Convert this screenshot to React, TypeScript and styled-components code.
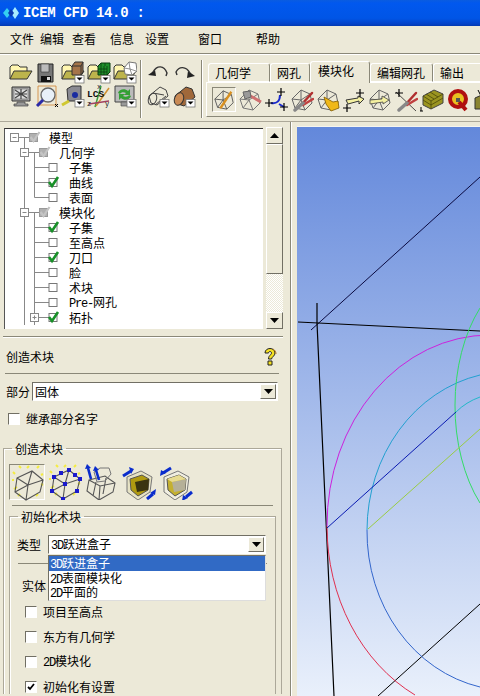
import * as React from 'react';
import styled, { createGlobalStyle } from 'styled-components';

const GlobalStyle = createGlobalStyle`
  html, body {
    margin: 0;
    padding: 0;
    background: #ece9d8;
  }
  body {
    font: 12px/15px "Noto Sans CJK SC", "Liberation Sans", sans-serif;
    color: #000;
  }
`;

const Page = styled.div`
  width: 480px;
  height: 696px;
  overflow: hidden;
  background: #ece9d8;
  display: flex;
  flex-direction: column;
`;

const TitleBar = styled.div`
  height: 26px;
  flex: none;
  display: flex;
  align-items: center;
  gap: 4px;
  padding-left: 3px;
  box-sizing: border-box;
  color: #fff;
  font: bold 14px/16px "Liberation Mono", monospace;
  letter-spacing: -0.3px;
  background: linear-gradient(#0a5ce0 0, #0158ee 12%, #0055e6 70%, #0342c8 92%, #0339b0 100%);
`;

const MenuBar = styled.div`
  height: 28px;
  flex: none;
  display: flex;
  align-items: center;
  box-sizing: border-box;
  padding: 0 0 2px 10px;
  border-bottom: 1px solid #8a8878;
  box-shadow: 0 1px 0 #fff;
`;

const MenuItem = styled.span<{ $left: number }>`
  margin-left: ${p => p.$left}px;
  line-height: 16px;
`;

const ToolArea = styled.div`
  height: 68px;
  flex: none;
  display: flex;
  box-sizing: border-box;
  padding: 6px 0 0 9px;
  border-bottom: 1px solid #aca899;
`;

const ToolGrid = styled.div<{ $cols: number }>`
  display: grid;
  grid-template-columns: repeat(${p => p.$cols}, 24px);
  grid-auto-rows: 24px;
  column-gap: 2px;
  align-content: start;
`;

const ToolSep = styled.div<{ $left: number; $right: number }>`
  width: 1px;
  height: 58px;
  background: #8a8878;
  box-shadow: 1px 0 0 #fff;
  margin: 0 ${p => p.$right}px 0 ${p => p.$left}px;
`;

const TabColumn = styled.div`
  flex: 1;
  display: flex;
  flex-direction: column;
  min-width: 0;
`;

const TabRow = styled.div`
  height: 22px;
  display: flex;
  align-items: flex-end;
  padding-left: 2px;
`;

const Tab = styled.div<{ $width: number; $active?: boolean }>`
  width: ${p => p.$width}px;
  height: ${p => (p.$active ? 22 : 19)}px;
  flex: none;
  box-sizing: border-box;
  padding-left: ${p => (p.$active ? 7 : 6)}px;
  border: 1px solid #fff;
  border-bottom: ${p => (p.$active ? 'none' : '1px solid #fff')};
  border-right: 1px solid #8a8878;
  border-radius: 3px 3px 0 0;
  line-height: 17px;
  white-space: nowrap;
  overflow: hidden;
  background: #ece9d8;
  margin-bottom: ${p => (p.$active ? -1 : 0)}px;
  position: relative;
`;

const TabPanel = styled.div`
  height: 35px;
  box-sizing: border-box;
  border-top: 1px solid #fff;
  border-left: 1px solid #fff;
  border-bottom: 1px solid #8a8878;
  display: flex;
  align-items: center;
  padding-left: 5px;
  gap: 2px;
`;

const TabTool = styled.div<{ $selected?: boolean }>`
  width: 24px;
  height: 25px;
  flex: none;
  box-sizing: border-box;
  ${p => p.$selected && 'border: 1px solid; border-color: #8a8878 #fff #fff #8a8878;'}
  display: flex;
  align-items: center;
  justify-content: center;
`;

const Main = styled.div`
  flex: 1;
  display: flex;
  min-height: 0;
`;

const LeftPanel = styled.div`
  width: 283px;
  flex: none;
  display: flex;
  flex-direction: column;
`;

const TreeSection = styled.div`
  display: flex;
  padding: 5px 0 0 4px;
`;

const TreeBox = styled.div`
  width: 259px;
  height: 201px;
  margin-top: 1px;
  box-sizing: border-box;
  background: #fff;
  border-top: 1px solid #333;
  border-left: 1px solid #555;
  overflow: hidden;
  padding-top: 1px;
`;

const TreeRow = styled.div`
  height: 15px;
  display: flex;
  align-items: center;
  white-space: nowrap;
`;

const TreeLabel = styled.span`
  line-height: 15px;
`;

const Latin = styled.span`
  font: 12px/14px "Liberation Mono", monospace;
  letter-spacing: -1.2px;
`;

const ScrollBar = styled.div`
  width: 17px;
  height: 202px;
  margin-left: 3px;
  flex: none;
  display: flex;
  flex-direction: column;
`;

const ScrollButton = styled.div`
  height: 17px;
  flex: none;
  box-sizing: border-box;
  background: #ece9d8;
  border: 1px solid;
  border-color: #fff #716f64 #716f64 #fff;
  display: flex;
  align-items: center;
  justify-content: center;
`;

const ScrollThumb = styled.div`
  height: 130px;
  flex: none;
  box-sizing: border-box;
  background: #ece9d8;
  border: 1px solid;
  border-color: #fff #716f64 #716f64 #fff;
`;

const ScrollTrack = styled.div`
  flex: 1;
  background: repeating-conic-gradient(#fff 0 25%, #ece9d8 0 50%) 0 0 / 2px 2px;
`;

const Groove = styled.div`
  height: 0;
  margin: 7px 0 0 3px;
  border-top: 1px solid #8a8878;
  border-bottom: 1px solid #fff;
`;

const FormTitle = styled.div`
  height: 36px;
  box-sizing: border-box;
  margin: 0 4px 0 5px;
  display: flex;
  align-items: center;
  justify-content: space-between;
  padding: 2px 2px 0 1px;
  border-bottom: 1px solid #8a8878;
`;

const PartRow = styled.div`
  display: flex;
  align-items: center;
  margin: 8px 0 0 6px;
  gap: 2px;
`;

const Combo = styled.div<{ $width: number }>`
  position: relative;
  width: ${p => p.$width}px;
  height: 19px;
  box-sizing: border-box;
  background: #fff;
  border: 1px solid;
  border-color: #716f64 #fff #fff #716f64;
  display: flex;
  align-items: center;
  justify-content: space-between;
  padding-left: 2px;
  flex: none;
`;

const ComboArrow = styled.div`
  width: 16px;
  height: 15px;
  box-sizing: border-box;
  background: #ece9d8;
  border: 1px solid;
  border-color: #fff #716f64 #716f64 #fff;
  margin-right: 1px;
  display: flex;
  align-items: center;
  justify-content: center;
`;

const Check = styled.div`
  width: 12px;
  height: 12px;
  flex: none;
  box-sizing: border-box;
  background: #fff;
  border: 1px solid;
  border-color: #716f64 #fff #fff #716f64;
  display: flex;
  align-items: center;
  justify-content: center;
`;

const CheckRow = styled.div<{ $top: number; $left: number }>`
  display: flex;
  align-items: center;
  gap: 6px;
  margin: ${p => p.$top}px 0 0 ${p => p.$left}px;
  height: 15px;
`;

const GroupBox = styled.fieldset<{ $top: number; $left: number; $right: number }>`
  margin: ${p => p.$top}px ${p => p.$right}px 0 ${p => p.$left}px;
  padding: 0;
  min-width: 0;
  border: 1px solid #aca899;
  box-shadow: inset 1px 1px 0 #fff;
  border-bottom: none;
`;

const Legend = styled.legend`
  margin-left: 8px;
  padding: 0 3px;
  line-height: 15px;
`;

const BlockTools = styled.div`
  display: flex;
  align-items: center;
  margin: 8px 0 0 5px;
`;

const BlockTool = styled.div<{ $selected?: boolean; $gap: number }>`
  width: 36px;
  height: 36px;
  flex: none;
  box-sizing: border-box;
  margin-right: ${p => p.$gap}px;
  ${p => p.$selected && 'border: 1px solid; border-color: #8a8878 #fff #fff #8a8878;'}
`;

const ThinRule = styled.div<{ $top: number }>`
  height: 1px;
  background: #8a8878;
  margin: ${p => p.$top}px 8px 0 8px;
`;

const TypeRow = styled.div`
  display: flex;
  align-items: center;
  margin: 11px 0 0 7px;
  gap: 7px;
`;

const DropList = styled.div`
  position: absolute;
  left: -1px;
  top: 19px;
  width: 218px;
  height: 46px;
  box-sizing: border-box;
  background: #fff;
  border: 1px solid;
  border-color: #716f64 #ddd #ddd #716f64;
  z-index: 2;
`;

const DropItem = styled.div<{ $selected?: boolean }>`
  height: 14.5px;
  line-height: 14px;
  padding-left: 1px;
  white-space: nowrap;
  ${p => p.$selected && 'background: #316ac5; color: #fff;'}
`;

const DropText = styled.span<{ $underline?: boolean }>`
  display: inline-block;
  ${p => p.$underline && 'width: 83px; border-bottom: 1px solid #fff; line-height: 12px;'}
`;

const FieldLabel = styled.div`
  margin: 14px 0 0 12px;
  line-height: 15px;
`;

const Sash = styled.div`
  width: 14px;
  flex: none;
  box-sizing: border-box;
  padding-left: 7px;
`;

const SashLine = styled.div`
  width: 1px;
  height: 100%;
  background: #8a8878;
  box-shadow: 1px 0 0 #fff;
`;

const Viewport = styled.div`
  flex: 1;
  margin-top: 4px;
  background: linear-gradient(#6388db 0, #e9f0fb 100%);
  border-top: 1px solid #f6f5ee;
  overflow: hidden;
`;

const ViewSvg = styled.svg`
  display: block;
`;

const IconSvg = styled.svg`
  display: block;
`;

/* ---------- icons ---------- */

const Icon: React.FC<{ size?: number; view?: number; children: React.ReactNode }> = ({ size = 24, view = 24, children }) => (
  <IconSvg width={size} height={size} viewBox={`0 0 ${view} ${view}`}>
    {children}
  </IconSvg>
);

const Badge = () => (
  <g>
    <rect x="14" y="15.5" width="9" height="7.5" fill="#fff" stroke="#777" strokeWidth="0.8" />
    <path d="M15.5 17.5h6l-3 3z" fill="#000" />
  </g>
);

const Folder = () => (
  <g stroke="#333" strokeWidth="1">
    <path d="M1 19V7l2-2h6l2 2h7v4" fill="#fff6b0" />
    <path d="M1 19l4-8h18l-5 8z" fill="#bdb44c" />
  </g>
);

const Wire = ({ color = '#555' }: { color?: string }) => (
  <g fill="none" stroke={color} strokeWidth="1">
    <path d="M11 2l9 4 2 9-7 7-10-2-3-9z" />
    <path d="M11 12L11 2M11 12l9-6M11 12l4 10M11 12L2 11M11 12l-6 8" />
  </g>
);

const Stars = ({ pts }: { pts: [number, number][] }) => (
  <g stroke="#000" strokeWidth="1.2">
    {pts.map(([x, y]) => (
      <path key={`${x}-${y}`} d={`M${x - 4} ${y}h8M${x} ${y - 4}v8`} />
    ))}
  </g>
);

const Pliers = () => (
  <g fill="none" strokeLinecap="round">
    <path d="M12 16l10-11" stroke="#b03030" strokeWidth="2.5" />
    <path d="M13 17l10-6" stroke="#c04040" strokeWidth="2.5" />
    <path d="M5 22l8-7" stroke="#888" strokeWidth="3.5" />
  </g>
);

// blue double arrows beside the solid cubes, x/y is the arrow head
const BlockArrow = ({ d, head }: { d: string; head: string }) => (
  <g>
    <path d={d} fill="none" stroke="#0a2ccc" strokeWidth="3" />
    <path d={head} fill="#0a2ccc" />
  </g>
);

const GoldCube = ({ light = false }: { light?: boolean }) => (
  <g stroke="#555" strokeWidth="1">
    <path d="M5 13L19 7l11 6-2 15-12 8-11-8z" fill={light ? '#f0eee0' : '#e6e2c4'} stroke="#777" />
    <path d="M8 15l12-4 7 4-1 11-10 6-7-6z" fill={light ? '#c4b030' : '#b09a10'} />
    <path d="M13 18l14-3-1 11-11 2z" fill={light ? '#b5b098' : '#3a3410'} stroke="none" />
    {light && <path d="M8 15l12-4 7 4-14 3z" fill="#e8dc90" stroke="none" />}
  </g>
);

const fileTools: React.ReactNode[] = [
  <Icon key="open"><Folder /></Icon>,
  <Icon key="save">
    <path d="M3 4h15v18H3z" fill="#777" stroke="#222" />
    <path d="M6 4h8v8H6z" fill="#bbb" stroke="#333" strokeWidth="0.6" />
    <path d="M6 16h10v6H6z" fill="#111" />
    <path d="M12 17h3v3h-3z" fill="#ddd" />
  </Icon>,
  <Icon key="box">
    <Folder />
    <path d="M11 6l3-4h8v10l-2 3h-9z" fill="#a5744a" stroke="#333" />
    <path d="M11 6h9v9M20 6l2-4" fill="none" stroke="#333" />
    <Badge />
  </Icon>,
  <Icon key="mesh">
    <Folder />
    <path d="M11 6l3-3h9v9l-3 3h-9z" fill="#1f8f2a" stroke="#0b3d10" />
    <path d="M11 9h9M11 12h9M14 6v9M17 6v9M20 6v9M14 3v3M18 3v3" stroke="#0b3d10" strokeWidth="0.8" />
    <Badge />
  </Icon>,
  <Icon key="wirefile">
    <Folder />
    <path d="M11 8l5-6 7 1 1 8-5 4-7-1z" fill="#fff" stroke="#777" />
    <path d="M16 2l1 7-6-1M17 9l6 2M17 9l2 6" fill="none" stroke="#777" strokeWidth="0.8" />
    <Badge />
  </Icon>,
  <Icon key="undo">
    <path d="M2 15l7-5 1 6z" fill="#222" />
    <path d="M7 12C11 5 18 5 21 13l-1 3" fill="none" stroke="#333" strokeWidth="1.4" />
  </Icon>,
  <Icon key="redo">
    <path d="M23 16l-7-5-1 7z" fill="#222" />
    <path d="M18 13C14 6 7 6 4 12l1 3" fill="none" stroke="#333" strokeWidth="1.4" />
  </Icon>,
  <Icon key="fit">
    <path d="M3 3h18v14H3z" fill="#aaa" stroke="#333" />
    <path d="M5 5h14v10H5z" fill="#ddd" stroke="#666" strokeWidth="0.6" />
    <path d="M6 6l12 8M18 6L6 14M12 5v10M6 10h12" stroke="#444" strokeWidth="1.2" />
    <path d="M8 18h8v2h3v2H5v-2h3z" fill="#999" stroke="#444" strokeWidth="0.7" />
  </Icon>,
  <Icon key="zoom">
    <path d="M3 2h18v19H3z" fill="none" stroke="#d08030" strokeWidth="0.8" />
    <circle cx="13" cy="11" r="7" fill="#e8f0f8" stroke="#666" strokeWidth="1.3" />
    <path d="M8 16l-6 6" stroke="#2a2aa8" strokeWidth="3" />
    <path d="M20 20l3 3M23 20l-3 3" stroke="#000" />
  </Icon>,
  <Icon key="tape">
    <path d="M6 5l5-3h9v15H7z" fill="#8a8a92" stroke="#333" />
    <circle cx="14" cy="11" r="3" fill="#1a2ca0" />
    <path d="M1 21l7-4" stroke="#d0c830" strokeWidth="3" />
    <Badge />
  </Icon>,
  <Icon key="lcs">
    <path d="M14 2l-6 21" stroke="#40a040" strokeWidth="1.5" />
    <path d="M22 4L9 22" stroke="#d09030" strokeWidth="1.5" />
    <path d="M2 20l20-3" stroke="#a04060" strokeWidth="1.5" />
    <text x="0" y="13" fontFamily="Liberation Mono" fontWeight="bold" fontSize="9.5" fill="#111">LCS</text>
    <text x="10" y="5" fontFamily="Liberation Mono" fontSize="7" fill="#111">x</text>
    <text x="0" y="22" fontFamily="Liberation Mono" fontSize="7" fill="#111">z</text>
    <text x="18" y="22" fontFamily="Liberation Mono" fontSize="7" fill="#111">y</text>
  </Icon>,
  <Icon key="refresh">
    <path d="M2 2h19v16H2z" fill="#bbb" stroke="#444" />
    <path d="M5 9c1-4 7-5 10-2l2-2v6h-6l2-2c-2-1-5-1-6 1z" fill="#35a035" />
    <path d="M18 12c-1 4-7 5-10 2l-2 2v-6h6l-2 2c2 1 5 1 6-1z" fill="#35a035" />
    <path d="M8 18h8v4H8z" fill="#999" stroke="#444" strokeWidth="0.6" />
    <Badge />
  </Icon>,
  <Icon key="wirecyl">
    <g fill="none" stroke="#444" strokeWidth="1">
      <path d="M3 12l11-9 6 3 2 6-11 9-6-2z" />
      <ellipse cx="6.5" cy="15" rx="4" ry="6" transform="rotate(20 6.5 15)" />
      <path d="M7 9l11 2M9 21l11-9" />
    </g>
    <Badge />
  </Icon>,
  <Icon key="solidcyl">
    <path d="M3 12L14 3l6 2 3 8-11 9-6-2z" fill="#a0683a" stroke="#333" />
    <ellipse cx="7" cy="15" rx="4.5" ry="6.5" transform="rotate(20 7 15)" fill="#c98a55" stroke="#333" />
    <Badge />
  </Icon>,
];

const tabTools: React.ReactNode[] = [
  <Icon key="t1">
    <Wire />
    <path d="M8 21L20 3" stroke="#d89020" strokeWidth="2.5" />
  </Icon>,
  <Icon key="t2">
    <Wire color="#777" />
    <path d="M9 6l14 8" stroke="#d07070" strokeWidth="3" />
    <path d="M5 4l7-1 1 6-6 2z" fill="#999" stroke="#666" />
  </Icon>,
  <Icon key="t3">
    <path d="M7 15c6 1 9-2 9-8M15 16l5 3" fill="none" stroke="#1a2acc" strokeWidth="2" />
    <Stars pts={[[17, 4], [5, 15], [20, 19]]} />
  </Icon>,
  <Icon key="t4">
    <Wire color="#666" />
    <Pliers />
  </Icon>,
  <Icon key="t5">
    <Wire color="#666" />
    <path d="M8 9l9 5 5-1 1 7-8 3-5-7z" fill="#f0b818" stroke="#805a00" strokeWidth="0.8" />
  </Icon>,
  <Icon key="t6">
    <path d="M4 12l12-2V8l6 3-5 5v-3L6 16z" fill="#f4f0a0" stroke="#333" />
    <Stars pts={[[18, 5], [5, 20]]} />
  </Icon>,
  <Icon key="t7">
    <Wire color="#666" />
    <path d="M2 12l12-1V8l7 4-6 4v-2L2 16z" fill="#f4f0a0" stroke="#444" strokeWidth="0.8" />
  </Icon>,
  <Icon key="t8">
    <path d="M2 4l20 19" stroke="#222" strokeWidth="0.8" />
    <Pliers />
    <Stars pts={[[5, 5]]} />
  </Icon>,
  <Icon key="t9">
    <path d="M3 8l11-6 9 4v9l-12 6-8-4z" fill="#9a9420" stroke="#444" />
    <path d="M3 8l8 5 12-7M11 13v8M6 6l8 5M10 4l8 5M3 12l8 5 12-7" fill="none" stroke="#4a4608" strokeWidth="0.8" />
    <path d="M1 19v4M0 23h3" stroke="#000" />
  </Icon>,
  <Icon key="t10">
    <circle cx="12" cy="11" r="8" fill="#e8c020" stroke="#b01010" strokeWidth="4" />
    <path d="M13 14l7 8" stroke="#b01010" strokeWidth="4" />
    <path d="M10 10h4v4h-4z" fill="#555" />
  </Icon>,
  <Icon key="t11">
    <path d="M3 10l9-4 9 4v11H3z" fill="#8a8430" stroke="#333" />
    <path d="M6 2l3 6M16 2l-2 6" stroke="#000" />
  </Icon>,
];

const yellowDashes = 'M3 7l2 2M9 1l2 2M19 1l-2 2M29 1l-2 2M33 9l-2 1M33 20l-2-1M4 24l3-2M8 31l2-2M26 31l2-2M2 15h2';

const blockTools: React.ReactNode[] = [
  <g key="b1" fill="none">
    <path d={yellowDashes} stroke="#f4ec40" strokeWidth="2" />
    <path d="M7 13l15-7 11 9-3 12-14 8-11-8z M18 20L22 6M18 20L33 15M18 20L16 35M18 20L7 13M18 20L5 27" stroke="#555" strokeWidth="1.1" />
  </g>,
  <g key="b2" fill="none">
    <path d={yellowDashes} stroke="#f4ec40" strokeWidth="2" />
    <path d="M7 13l15-7 11 9-3 12-14 8-11-8z M18 20L22 6M18 20L33 15M18 20L16 35M18 20L7 13M18 20L5 27" stroke="#555" strokeWidth="1.1" />
    <g fill="#1a1acc">
      {[[7, 13], [14, 9], [22, 6], [28, 11], [33, 15], [30, 27], [16, 35], [5, 27], [18, 20]].map(([x, y]) => (
        <rect key={`${x}-${y}`} x={x - 2} y={y - 2} width="4" height="4" />
      ))}
    </g>
  </g>,
  <g key="b3" fill="none">
    <path d="M5 16l16-4 10 7-2 9-14 8L3 27z M5 16l11 6 15-3M16 22l-1 14M12 18l-3 14M22 14l-3 16" stroke="#555" strokeWidth="1.1" />
    <path d="M10 8l6-4h9l2 6-6 7-8 1z" stroke="#777" />
    <path d="M4 4l3 11M12 6l3 10" stroke="#0a2ccc" strokeWidth="2.6" />
    <path d="M1 5l2-5 4 4zM9 7l2-5 4 4z" fill="#0a2ccc" />
  </g>,
  <g key="b4">
    <GoldCube />
    <BlockArrow d="M1 12l8-5" head="M7 3l5 2-3 5z" />
    <BlockArrow d="M25 35l6-5" head="M34 25l-1 6-5-2z" />
  </g>,
  <g key="b5">
    <GoldCube light />
    <BlockArrow d="M4 9l8-5" head="M1 12l1-6 5 3z" />
    <BlockArrow d="M27 33l6-5" head="M23 37l1-6 5 3z" />
  </g>,
];

const ArrowDown = () => (
  <svg width="9" height="5" viewBox="0 0 9 5"><path d="M0 0h9L4.5 5z" fill="#000" /></svg>
);

const ArrowUp = () => (
  <svg width="9" height="5" viewBox="0 0 9 5"><path d="M0 5h9L4.5 0z" fill="#000" /></svg>
);

const HelpIcon = () => (
  <svg width="14" height="19" viewBox="0 0 14 19">
    <path d="M2 6c0-6 10-6 10 0 0 3-3 3.500-3.500 6H5.500c0-4 3-4 3-6 0-2-3-2-3 0z" fill="#f4e020" stroke="#222" />
    <path d="M5 14h4v4H5z" fill="#f4e020" stroke="#222" />
    <path d="M10 2c2 1 3 3 3 5" fill="none" stroke="#b87820" />
  </svg>
);

/* ---------- tree ---------- */

type TreeItem = {
  label: React.ReactNode;
  level: 0 | 1 | 2;
  state: 'gray' | 'green' | 'none';
  expander?: '-' | '+';
  last?: boolean;
};

const treeItems: TreeItem[] = [
  { label: '模型', level: 0, state: 'gray', expander: '-' },
  { label: '几何学', level: 1, state: 'gray', expander: '-' },
  { label: '子集', level: 2, state: 'none' },
  { label: '曲线', level: 2, state: 'green' },
  { label: '表面', level: 2, state: 'none', last: true },
  { label: '模块化', level: 1, state: 'gray', expander: '-' },
  { label: '子集', level: 2, state: 'green' },
  { label: '至高点', level: 2, state: 'none' },
  { label: '刀口', level: 2, state: 'green' },
  { label: '脸', level: 2, state: 'none' },
  { label: '术块', level: 2, state: 'none' },
  { label: <><Latin>Pre-</Latin>网孔</>, level: 2, state: 'none' },
  { label: '拓扑', level: 2, state: 'green', expander: '+' },
];

const TreeGuides: React.FC<{ item: TreeItem }> = ({ item }) => {
  const { level, state, expander, last } = item;
  const boxX = 24.5 + level * 10 - (level === 2 ? 0.5 : 0);
  const ex = 9 + level * 10;
  const width = 44 + level * 10;
  const gray = '#888';
  const exCenter = level === 2 ? 29.5 : ex + 0.5;
  return (
    <svg width={width} height="15" viewBox={`0 0 ${width} 15`} style={{ flex: 'none' }}>
      {level > 0 && <path d="M19.5 0V15" stroke={gray} />}
      {level === 0 && <path d="M19.5 7.500V15" stroke={gray} />}
      {level === 1 && <path d="M29.5 7.500V15" stroke={gray} />}
      {level === 2 && <path d={`M29.5 0V${last ? 7.5 : 15}`} stroke={gray} />}
      {level === 2 && <path d={`M29.5 7.500H${boxX}`} stroke={gray} />}
      {level < 2 && <path d={`M${ex} 7.500H${boxX}`} stroke={gray} />}
      {expander && (
        <g>
          <rect x={exCenter - 4} y="3.500" width="8" height="8" fill="#fff" stroke={gray} />
          <path d={`M${exCenter - 2} 7.500h4`} stroke={gray} />
          {expander === '+' && <path d="M29.5 5.500v4" stroke={gray} />}
        </g>
      )}
      <rect
        x={boxX}
        y="3.500"
        width="8"
        height="8"
        fill={state === 'gray' ? '#b0b0b0' : '#fff'}
        stroke={state === 'gray' ? '#999' : '#777'}
      />
      {state === 'green' && <path d={`M${boxX} 7l3 4 6-9`} fill="none" stroke="#189028" strokeWidth="2.6" />}
      {state === 'gray' && <path d={`M${boxX + 1} 7l3 4 6-9`} fill="none" stroke="#c4c4c4" strokeWidth="2.2" />}
    </svg>
  );
};

const initChecks = [
  { label: '项目至高点' },
  { label: '东方有几何学' },
  { label: <><Latin>2D</Latin>模块化</> },
  { label: '初始化有设置', checked: true },
];

const Viewer = () => (
  <ViewSvg width="183" height="569" viewBox="297 127 183 569">
    <g fill="none" strokeWidth="1">
      <path d="M311 330L480 177" stroke="#0a0a40" />
      <path d="M298 322L480 331" stroke="#000" strokeWidth="1.2" />
      <path d="M317 303V323L334 696" stroke="#000" strokeWidth="1.2" />
      <path d="M480 604L378 696" stroke="#000" />
      <path d="M327 526A163 190 0 0 1 490 335" stroke="#cc22dd" />
      <path d="M327 526A163 190 0 0 0 415 695" stroke="#e03050" />
      <path d="M367 530A143 159 0 0 1 480 375" stroke="#22a0d0" />
      <path d="M367 530A143 159 0 0 0 480 687" stroke="#3366cc" />
      <path d="M480 308A85 137 0 0 0 455 405A85 137 0 0 0 480 503" stroke="#33dd66" />
      <path d="M480 397Q466 402 456 412" stroke="#22b8c8" />
      <path d="M327 528L456 412" stroke="#0a1ab0" />
      <path d="M368 529L480 429" stroke="#99cc44" />
    </g>
  </ViewSvg>
);

const App: React.FC = () => (
  <Page>
    <GlobalStyle />
    <TitleBar>
      <svg width="16" height="16" viewBox="0 0 16 16">
        <path d="M0 8l4-5 4 5-4 5z" fill="#35d0f0" />
        <path d="M8 8l4-6 4 6-4 6z" fill="#a8ecff" />
        <path d="M5 8l3-4 3 4-3 4z" fill="#0a3ab0" />
      </svg>
      <span>ICEM CFD 14.0 :</span>
    </TitleBar>
    <MenuBar>
      <MenuItem $left={0}>文件</MenuItem>
      <MenuItem $left={6}>编辑</MenuItem>
      <MenuItem $left={8}>查看</MenuItem>
      <MenuItem $left={14}>信息</MenuItem>
      <MenuItem $left={11}>设置</MenuItem>
      <MenuItem $left={29}>窗口</MenuItem>
      <MenuItem $left={34}>帮助</MenuItem>
    </MenuBar>
    <ToolArea>
      <ToolGrid $cols={5}>{[...fileTools.slice(0, 5), ...fileTools.slice(7, 12)]}</ToolGrid>
      <ToolSep $left={3} $right={5} />
      <ToolGrid $cols={2}>{[...fileTools.slice(5, 7), ...fileTools.slice(12)]}</ToolGrid>
      <ToolSep $left={5} $right={4} />
      <TabColumn>
        <TabRow>
          <Tab $width={62}>几何学</Tab>
          <Tab $width={40}>网孔</Tab>
          <Tab $width={60} $active>模块化</Tab>
          <Tab $width={63}>编辑网孔</Tab>
          <Tab $width={50}>输出</Tab>
        </TabRow>
        <TabPanel>
          {tabTools.map((tool, i) => (
            <TabTool key={i} $selected={i === 0}>{tool}</TabTool>
          ))}
        </TabPanel>
      </TabColumn>
    </ToolArea>
    <Main>
      <LeftPanel>
        <TreeSection>
          <TreeBox>
            {treeItems.map((item, i) => (
              <TreeRow key={i}>
                <TreeGuides item={item} />
                <TreeLabel>{item.label}</TreeLabel>
              </TreeRow>
            ))}
          </TreeBox>
          <ScrollBar>
            <ScrollButton><ArrowUp /></ScrollButton>
            <ScrollThumb />
            <ScrollTrack />
            <ScrollButton><ArrowDown /></ScrollButton>
          </ScrollBar>
        </TreeSection>
        <Groove />
        <FormTitle>
          创造术块
          <HelpIcon />
        </FormTitle>
        <PartRow>
          部分
          <Combo $width={246}>
            固体
            <ComboArrow><ArrowDown /></ComboArrow>
          </Combo>
        </PartRow>
        <CheckRow $top={10} $left={8}>
          <Check />
          继承部分名字
        </CheckRow>
        <GroupBox $top={15} $left={3} $right={1}>
          <Legend>创造术块</Legend>
          <BlockTools>
            {blockTools.map((tool, i) => (
              <BlockTool key={i} $selected={i === 0} $gap={i % 2 === 0 ? 2 : 1}>
                <Icon size={36} view={36}>{tool}</Icon>
              </BlockTool>
            ))}
          </BlockTools>
          <ThinRule $top={5} />
          <GroupBox $top={3} $left={5} $right={5}>
            <Legend>初始化术块</Legend>
            <TypeRow>
              类型
              <Combo $width={218}>
                <span><Latin>3D</Latin>跃进盒子</span>
                <ComboArrow><ArrowDown /></ComboArrow>
                <DropList>
                  <DropItem $selected><DropText $underline><Latin>3D</Latin>跃进盒子</DropText></DropItem>
                  <DropItem><Latin>2D</Latin>表面模块化</DropItem>
                  <DropItem><Latin>2D</Latin>平面的</DropItem>
                </DropList>
              </Combo>
            </TypeRow>
            <ThinRule $top={9} />
            <FieldLabel>实体</FieldLabel>
            {initChecks.map((c, i) => (
              <CheckRow key={i} $top={i === 0 ? 11 : 10} $left={15}>
                <Check>
                  {c.checked && (
                    <svg width="8" height="8" viewBox="0 0 8 8"><path d="M1 4l2 2 4-5" fill="none" stroke="#000" strokeWidth="1.8" /></svg>
                  )}
                </Check>
                <span>{c.label}</span>
              </CheckRow>
            ))}
          </GroupBox>
        </GroupBox>
      </LeftPanel>
      <Sash><SashLine /></Sash>
      <Viewport><Viewer /></Viewport>
    </Main>
  </Page>
);

export default App;
